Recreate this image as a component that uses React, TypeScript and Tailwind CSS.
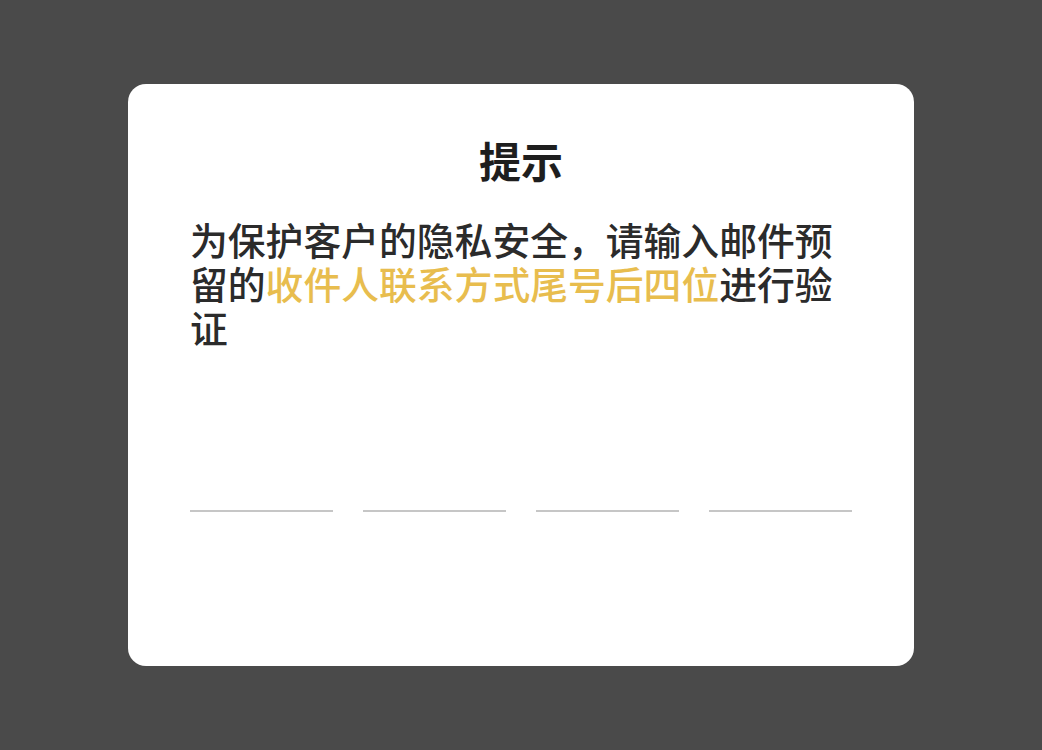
const FONT = "font-['Noto_Sans_CJK_SC','Noto_Sans',sans-serif]";

function CodeSlots({ count = 4 }: { count?: number }) {
    return (
        <div className="grid grid-cols-4 gap-[30px]">
            {Array.from({ length: count }).map((_, i) => (
                <div key={i} className="h-[2px] bg-[#c6c6c6]" />
            ))}
        </div>
    );
}

export default function App() {
    return (
        <div className={`w-full h-[750px] bg-[#4a4a4a] flex items-center justify-center ${FONT}`}>
            <div className="w-[786px] h-[582px] bg-white rounded-[18px] flex flex-col px-[62px] pt-[52px]">
                <h1 className="text-center text-[42px] leading-[48px] font-bold text-[#1e1e1e]">
                    提示
                </h1>
                <p className="mt-[33px] text-[37.8px] leading-[44px] font-medium text-[#2b2b2b]">
                    为保护客户的隐私安全，请输入邮件预留的
                    <span className="text-[#e8bd4e]">收件人联系方式尾号后四位</span>
                    进行验证
                </p>
                <div className="mt-[161px]">
                    <CodeSlots />
                </div>
            </div>
        </div>
    );
}
